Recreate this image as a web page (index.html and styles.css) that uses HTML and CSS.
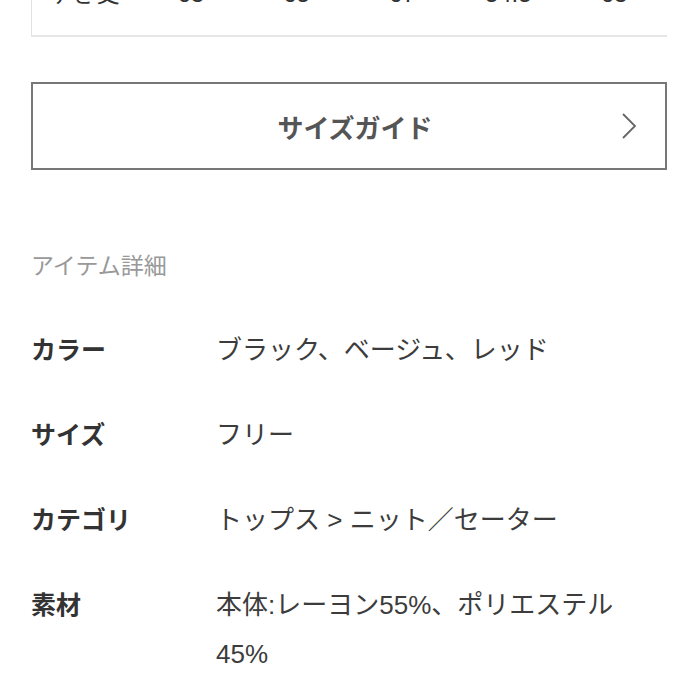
FILE: index.html
```html
<!DOCTYPE html>
<html lang="ja">
<head>
    <meta charset="UTF-8">
    <meta name="viewport" content="width=device-width, initial-scale=1.0">
    <title>アイテム詳細</title>
    <link rel="stylesheet" href="styles.css">
</head>
<body>
    <section class="page">
        <div class="size-table">
            <div class="size-row">
                <span class="size-name">ゆき丈</span>
                <span>63</span>
                <span>65</span>
                <span>67</span>
                <span>54.5</span>
                <span>63</span>
            </div>
        </div>

        <a class="guide-btn" href="#">
            <span class="guide-label">サイズガイド</span>
            <svg class="guide-arrow" width="16" height="28" viewBox="0 0 16 28">
                <polyline points="2,2 14,14 2,26" fill="none" stroke="#666" stroke-width="1.8"/>
            </svg>
        </a>

        <h3 class="details-title">アイテム詳細</h3>

        <div class="details">
            <div class="detail-row">
                <div class="detail-label">カラー</div>
                <div class="detail-value">ブラック、ベージュ、レッド</div>
            </div>
            <div class="detail-row">
                <div class="detail-label">サイズ</div>
                <div class="detail-value">フリー</div>
            </div>
            <div class="detail-row">
                <div class="detail-label">カテゴリ</div>
                <div class="detail-value">トップス &gt; ニット／セーター</div>
            </div>
            <div class="detail-row">
                <div class="detail-label">素材</div>
                <div class="detail-value">本体:レーヨン55%、ポリエステル45%</div>
            </div>
        </div>
    </section>
</body>
</html>
```

FILE: styles.css
```css
body {
    font-family: "Liberation Sans", "Noto Sans CJK JP", sans-serif;
    background-color: #fff;
    color: #333;
    margin: 0;
    overflow: hidden;
}
.page {
    padding: 0 31px;
}
.size-table {
    margin-top: -21px;
    border-left: 1px solid #e2e2e2;
    border-bottom: 2px solid #e6e6e6;
}
.size-row {
    display: grid;
    grid-template-columns: repeat(6, 1fr);
    font-size: 24px;
    line-height: 30px;
    padding-bottom: 26px;
    color: #333;
}
.size-row span {
    text-align: center;
}
.size-row .size-name {
    text-align: left;
    padding-left: 16px;
}
.guide-btn {
    margin-top: 45px;
    height: 88px;
    border: 2px solid #777;
    display: grid;
    grid-template-columns: 1fr auto 1fr;
    align-items: center;
    padding: 0 28px 0 40px;
    text-decoration: none;
    box-sizing: border-box;
}
.guide-label {
    grid-column: 2;
    font-size: 26px;
    font-weight: bold;
    color: #555;
}
.guide-arrow {
    grid-column: 3;
    justify-self: end;
}
.details-title {
    margin: 81px 0 0;
    font-size: 23px;
    line-height: 30px;
    font-weight: normal;
    color: #999;
}
.details {
    margin-top: 45px;
    display: flex;
    flex-direction: column;
    gap: 36px;
}
.detail-row {
    display: grid;
    grid-template-columns: 185px 1fr;
    line-height: 49px;
}
.detail-label {
    font-size: 25px;
    font-weight: bold;
    color: #333;
}
.detail-value {
    max-width: 420px;
    font-size: 26px;
    color: #3c3c3c;
}
```
